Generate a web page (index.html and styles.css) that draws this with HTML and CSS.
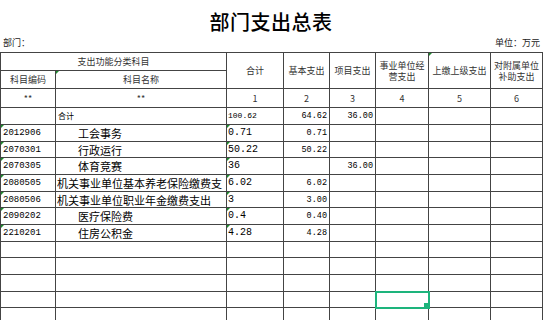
FILE: index.html
```html
<!DOCTYPE html>
<html lang="zh-CN">
<head>
    <meta charset="UTF-8">
    <title>部门支出总表</title>
    <link rel="stylesheet" href="styles.css">
</head>
<body>
    <div class="sheet">
        <h1 class="title">部门支出总表</h1>
        <div class="meta">
            <span>部门：</span>
            <span>单位：万元</span>
        </div>
        <table class="grid">
            <colgroup>
                <col style="width:55px">
                <col style="width:171px">
                <col style="width:57px">
                <col style="width:46px">
                <col style="width:46px">
                <col style="width:53px">
                <col style="width:62px">
                <col style="width:52px">
            </colgroup>
            <thead>
                <tr class="head-a">
                    <th colspan="2">支出功能分类科目</th>
                    <th rowspan="2">合计</th>
                    <th rowspan="2">基本支出</th>
                    <th rowspan="2">项目支出</th>
                    <th rowspan="2">事业单位经营支出</th>
                    <th rowspan="2" class="tri">上缴上级支出</th>
                    <th rowspan="2">对附属单位补助支出</th>
                </tr>
                <tr class="head-b">
                    <th>科目编码</th>
                    <th class="tri">科目名称</th>
                </tr>
                <tr class="head-c">
                    <th>**</th>
                    <th>**</th>
                    <th>1</th>
                    <th>2</th>
                    <th>3</th>
                    <th>4</th>
                    <th>5</th>
                    <th>6</th>
                </tr>
            </thead>
            <tbody>
                <tr>
                    <td></td>
                    <td class="label">合计</td>
                    <td class="small">100.62</td>
                    <td class="num">64.62</td>
                    <td class="num">36.00</td>
                    <td></td><td></td><td></td>
                </tr>
                <tr>
                    <td class="code tri">2012906</td>
                    <td class="name indent">工会事务</td>
                    <td class="total tri">0.71</td>
                    <td class="num">0.71</td>
                    <td></td><td></td><td></td><td></td>
                </tr>
                <tr>
                    <td class="code tri">2070301</td>
                    <td class="name indent">行政运行</td>
                    <td class="total tri">50.22</td>
                    <td class="num">50.22</td>
                    <td></td><td></td><td></td><td></td>
                </tr>
                <tr>
                    <td class="code tri">2070305</td>
                    <td class="name indent">体育竞赛</td>
                    <td class="total tri">36</td>
                    <td></td>
                    <td class="num">36.00</td>
                    <td></td><td></td><td></td>
                </tr>
                <tr>
                    <td class="code tri">2080505</td>
                    <td class="name"><div class="clip">机关事业单位基本养老保险缴费支出</div></td>
                    <td class="total tri">6.02</td>
                    <td class="num">6.02</td>
                    <td></td><td></td><td></td><td></td>
                </tr>
                <tr>
                    <td class="code tri">2080506</td>
                    <td class="name">机关事业单位职业年金缴费支出</td>
                    <td class="total tri">3</td>
                    <td class="num">3.00</td>
                    <td></td><td></td><td></td><td></td>
                </tr>
                <tr>
                    <td class="code tri">2090202</td>
                    <td class="name indent">医疗保险费</td>
                    <td class="total tri">0.4</td>
                    <td class="num">0.40</td>
                    <td></td><td></td><td></td><td></td>
                </tr>
                <tr>
                    <td class="code tri">2210201</td>
                    <td class="name indent">住房公积金</td>
                    <td class="total tri">4.28</td>
                    <td class="num">4.28</td>
                    <td></td><td></td><td></td><td></td>
                </tr>
                <tr><td></td><td></td><td></td><td></td><td></td><td></td><td></td><td></td></tr>
                <tr><td></td><td></td><td></td><td></td><td></td><td></td><td></td><td></td></tr>
                <tr><td></td><td></td><td></td><td></td><td></td><td></td><td></td><td></td></tr>
                <tr><td></td><td></td><td></td><td></td><td></td><td class="sel"></td><td></td><td></td></tr>
                <tr><td></td><td></td><td></td><td></td><td></td><td></td><td></td><td></td></tr>
            </tbody>
        </table>
    </div>
</body>
</html>
```

FILE: styles.css
```css
body {
    margin: 0;
    background: #fff;
    font-family: "Noto Sans CJK SC", "Liberation Sans", sans-serif;
    color: #000;
    overflow: hidden;
}

.sheet {
    width: 542px;
}

.title {
    margin: 0;
    padding-top: 8px;
    height: 28px;
    line-height: 28px;
    font-size: 20px;
    font-weight: 500;
    text-align: center;
    letter-spacing: 0.5px;
}

.meta {
    display: flex;
    justify-content: space-between;
    height: 16px;
    line-height: 14px;
    font-size: 9px;
    color: #222;
    padding: 0 2px 0 3px;
}

.grid {
    width: 542px;
    table-layout: fixed;
    border-collapse: collapse;
}

.grid th,
.grid td {
    position: relative;
    border: 1px solid #444;
    padding: 0 1px;
    overflow: hidden;
    white-space: nowrap;
}

.grid th {
    font-size: 9px;
    font-weight: 400;
    color: #333;
    line-height: 11px;
    white-space: normal;
    text-align: center;
}

.head-a { height: 18px; }
.head-b { height: 18px; }
.head-c { height: 19px; }

.grid tbody tr { height: 17px; }
.grid tbody tr:nth-child(3n) { height: 16px; }

.grid td {
    font-size: 11px;
    line-height: 14px;
    text-align: left;
}

.grid td.code {
    font-family: "Liberation Mono", monospace;
    font-size: 9px;
    padding-left: 2px;
}

.grid td.indent {
    padding-left: 22px;
}

.clip {
    height: 16px;
    overflow: hidden;
    white-space: normal;
    line-height: 15px;
    padding-top: 1px;
    box-sizing: border-box;
}

.grid td.label {
    font-size: 8px;
    padding-left: 2px;
}

.grid td.small {
    font-family: "Liberation Mono", monospace;
    font-size: 8px;
}

.grid td.total {
    font-family: "Liberation Mono", monospace;
    font-size: 10px;
}

.grid td.num {
    font-family: "Liberation Mono", monospace;
    font-size: 8.5px;
    text-align: right;
    padding-right: 2px;
}

.tri::before {
    content: "";
    position: absolute;
    top: 0;
    left: 0;
    border-top: 3px solid #1e8a2e;
    border-right: 3px solid transparent;
}

.sel {
    outline: 2px solid #1db47c;
    outline-offset: -1px;
}

.sel::after {
    content: "";
    position: absolute;
    right: -1px;
    bottom: -1px;
    width: 4px;
    height: 4px;
    background: #1db47c;
    border: 1px solid #fff;
}
```
